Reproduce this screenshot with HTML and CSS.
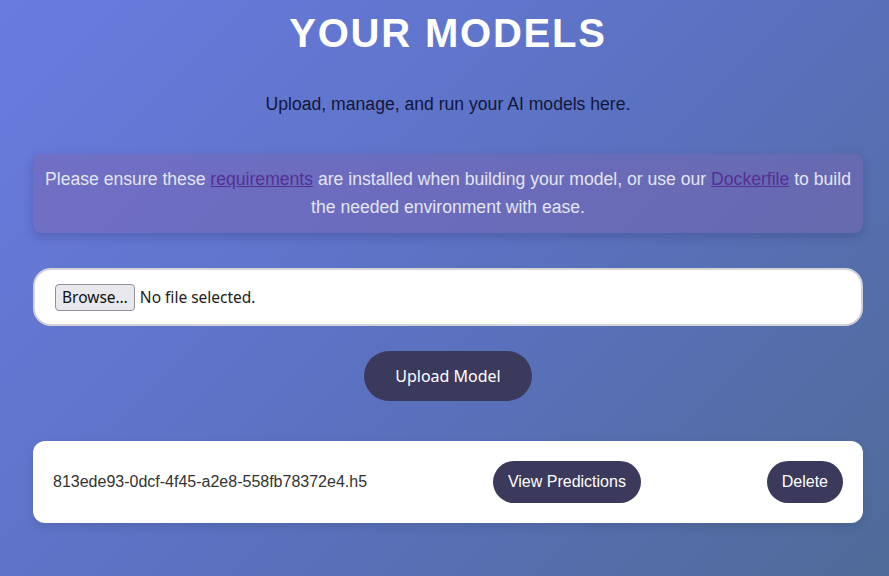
FILE: index.html
```html
<!DOCTYPE html>
<html lang="en">
<head>
  <meta charset="UTF-8">
  <title>Your Models</title>
  <link rel="stylesheet" href="styles.css">
</head>
<body>
  <div class="container">
    <h1>YOUR MODELS</h1>
    <p class="subtitle">Upload, manage, and run your AI models here.</p>

    <div class="notice">
      Please ensure these <a href="#">requirements</a> are installed when building your model, or use our <a href="#">Dockerfile</a> to build the needed environment with ease.
    </div>

    <form class="upload-form">
      <div class="file-box">
        <span class="browse">Browse…</span>
        <span class="file-name">No file selected.</span>
      </div>
      <button type="button" class="upload-btn">Upload Model</button>
    </form>

    <div class="model-card">
      <span class="model-name">813ede93-0dcf-4f45-a2e8-558fb78372e4.h5</span>
      <button class="pill">View Predictions</button>
      <button class="pill">Delete</button>
    </div>
  </div>
</body>
</html>
```

FILE: styles.css
```css
html, body {
  height: 100%;
}

body {
  margin: 0;
  font-family: "Liberation Sans", Arial, sans-serif;
  background: linear-gradient(135deg, #6a7be0 0%, #5b72c2 50%, #4f6b98 100%);
  color: #fff;
}

.container {
  width: 830px;
  margin-left: 33px;
}

h1 {
  margin: 0;
  padding-top: 9px;
  font-size: 40px;
  letter-spacing: 1.8px;
  text-align: center;
  line-height: 48px;
}

.subtitle {
  margin: 37px 0 0;
  font-size: 17.6px;
  line-height: 20px;
  color: #14163a;
  text-align: center;
}

.notice {
  margin-top: 40px;
  padding: 11px 6px 12px;
  background: rgba(125, 100, 175, 0.45);
  border-radius: 8px;
  box-shadow: 0 4px 10px rgba(40, 40, 100, 0.25);
  color: #e4e4f4;
  font-size: 17.6px;
  line-height: 28px;
  text-align: center;
}

.notice a {
  color: #562f96;
}

.upload-form {
  margin-top: 35px;
  display: flex;
  flex-direction: column;
  align-items: center;
}

.file-box {
  box-sizing: border-box;
  width: 100%;
  height: 58px;
  padding: 0 20px;
  display: flex;
  align-items: center;
  gap: 5px;
  background: #fff;
  border: 2px solid #d4d4d8;
  border-radius: 18px;
  font-family: "Noto Sans", sans-serif;
  font-size: 15.5px;
  color: #222;
}

.browse {
  padding: 1px 6px 2px;
  background: #e9e9ed;
  border: 1px solid #8f8f9d;
  border-radius: 4px;
  color: #111;
}

.upload-btn {
  margin-top: 25px;
  width: 168px;
  height: 50px;
  border: none;
  border-radius: 25px;
  background: #3b3a5c;
  color: #fff;
  font-family: "Noto Sans", sans-serif;
  font-size: 16px;
  cursor: pointer;
}

.model-card {
  box-sizing: border-box;
  margin-top: 40px;
  height: 82px;
  padding: 0 20px;
  display: flex;
  align-items: center;
  justify-content: space-between;
  background: #fff;
  border-radius: 12px;
  box-shadow: 0 4px 10px rgba(0, 0, 0, 0.1);
}

.model-name {
  color: #333;
  font-size: 16px;
}

.pill {
  height: 42px;
  padding: 0 15px;
  border: none;
  border-radius: 21px;
  background: #3b3a5c;
  color: #fff;
  font-family: "Liberation Sans", Arial, sans-serif;
  font-size: 16px;
  cursor: pointer;
}
```
